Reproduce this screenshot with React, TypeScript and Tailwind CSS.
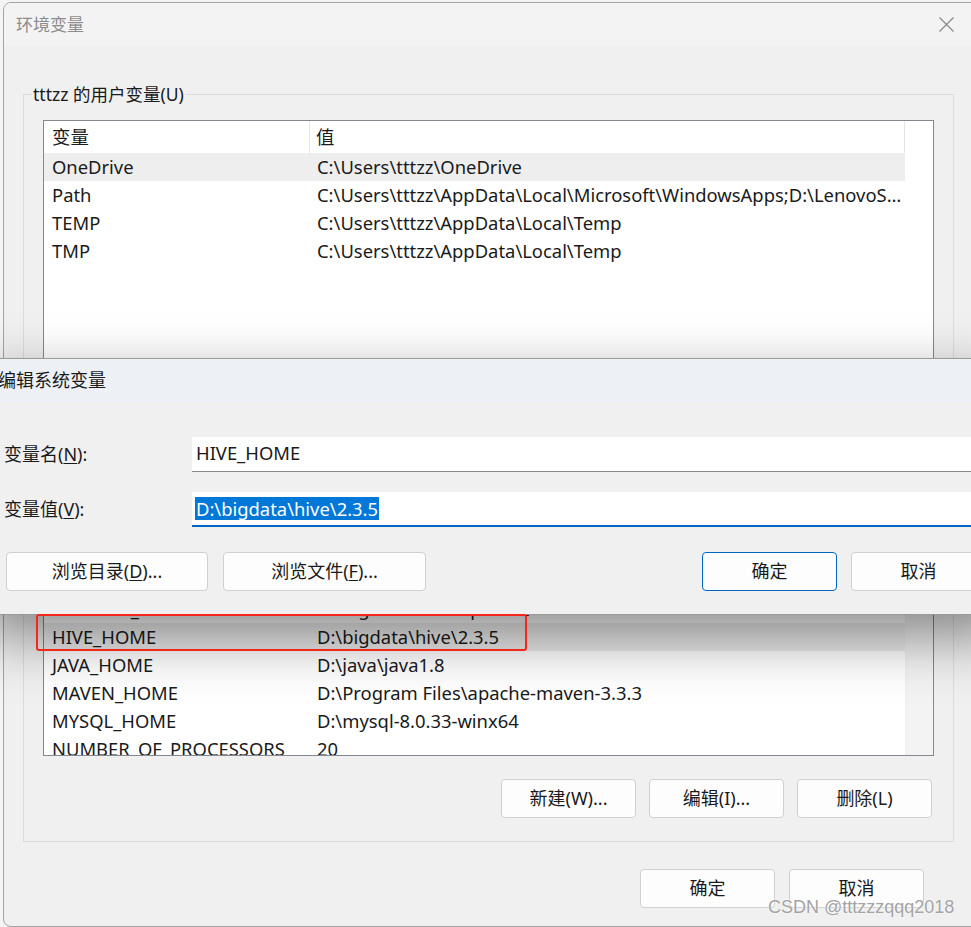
import clsx from "clsx";

const font = "font-['Noto_Sans','Noto_Sans_CJK_SC',sans-serif]";

type Var = { name: string; value: string; selected?: boolean };

const userVars: Var[] = [
  { name: "OneDrive", value: "C:\\Users\\tttzz\\OneDrive", selected: true },
  {
    name: "Path",
    value:
      "C:\\Users\\tttzz\\AppData\\Local\\Microsoft\\WindowsApps;D:\\LenovoSoftstore\\Install",
  },
  { name: "TEMP", value: "C:\\Users\\tttzz\\AppData\\Local\\Temp" },
  { name: "TMP", value: "C:\\Users\\tttzz\\AppData\\Local\\Temp" },
];

const systemVars: Var[] = [
  { name: "ComSpec", value: "C:\\Windows\\system32\\cmd.exe" },
  { name: "DriverData", value: "C:\\Windows\\System32\\Drivers\\DriverData" },
  { name: "HADOOP_HOME", value: "D:\\bigdata\\hadoop\\2.7.2" },
  { name: "HIVE_HOME", value: "D:\\bigdata\\hive\\2.3.5", selected: true },
  { name: "JAVA_HOME", value: "D:\\java\\java1.8" },
  { name: "MAVEN_HOME", value: "D:\\Program Files\\apache-maven-3.3.3" },
  { name: "MYSQL_HOME", value: "D:\\mysql-8.0.33-winx64" },
  { name: "NUMBER_OF_PROCESSORS", value: "20" },
];

function Header() {
  return (
    <div className="flex h-[32px] w-[861px] shrink-0 items-center bg-white">
      <div className="flex h-full w-[266px] items-center border-r border-[#e5e5e5] pl-[8px]">
        变量
      </div>
      <div className="flex h-full flex-1 items-center border-r border-[#e5e5e5] pl-[6px]">
        值
      </div>
    </div>
  );
}

function Row({ v }: { v: Var }) {
  return (
    <div
      className={clsx(
        "flex h-[28px] w-[861px] shrink-0 items-center",
        v.selected && "bg-[#eeeeee]",
      )}
    >
      <div className="w-[266px] truncate pl-[8px]">{v.name}</div>
      <div className="min-w-0 flex-1 truncate pl-[7px]">{v.value}</div>
    </div>
  );
}

function Btn({
  children,
  className,
  primary,
}: {
  children: React.ReactNode;
  className?: string;
  primary?: boolean;
}) {
  return (
    <div
      className={clsx(
        "flex h-[39px] shrink-0 items-center justify-center rounded-[4px] border bg-[#fdfdfd] text-[18px] text-[#1a1a1a]",
        primary ? "border-[#0067c0]" : "border-[#d0d0d0]",
        className,
      )}
    >
      {children}
    </div>
  );
}

function Group({
  label,
  children,
  className,
}: {
  label: string;
  children: React.ReactNode;
  className?: string;
}) {
  return (
    <fieldset className={clsx("w-[931px] border border-[#dcdcdc] px-[19px] pb-[23px]", className)}>
      <legend className="-ml-[11px] px-[1px] text-[17.5px] leading-[22px] text-[#1a1a1a]">
        {label}
      </legend>
      {children}
    </fieldset>
  );
}

function EditDialog() {
  return (
    <div className="absolute left-[-19px] top-[358px] flex h-[257px] w-[1030px] flex-col border border-[#9a9a9a] bg-[#f0f0f0] shadow-[0_22px_55px_rgba(0,0,0,0.45)]">
      <div className="flex h-[43px] shrink-0 items-center bg-[#edf1f6] pl-[16px] text-[18px] text-[#1a1a1a]">
        编辑系统变量
      </div>
      <div className="flex flex-1 flex-col pl-[22px] pr-[24px] pt-[35px]">
        <div className="grid grid-cols-[188px_1fr] items-center text-[18px] text-[#1a1a1a]">
          <div>
            变量名(<span className="underline underline-offset-2">N</span>):
          </div>
          <div className="flex h-[35px] items-center border-b border-[#8a8a8a] bg-white pb-[2px] pl-[4px] text-[18.4px]">
            HIVE_HOME
          </div>
        </div>
        <div className="mt-[20px] grid grid-cols-[188px_1fr] items-center text-[18px] text-[#1a1a1a]">
          <div>
            变量值(<span className="underline underline-offset-2">V</span>):
          </div>
          <div className="flex h-[35px] items-center border-b-2 border-[#0067c0] bg-white pl-[3px] text-[18.4px]">
            <span className="bg-[#0078d7] px-[1px] leading-[23px] text-white">
              D:\bigdata\hive\2.3.5
            </span>
          </div>
        </div>
        <div className="mt-[25px] flex items-center">
          <div className="ml-[2px] flex gap-[15px]">
            <Btn className="w-[202px]">
              浏览目录(<span className="underline underline-offset-2">D</span>)...
            </Btn>
            <Btn className="w-[203px]">
              浏览文件(<span className="underline underline-offset-2">F</span>)...
            </Btn>
          </div>
          <div className="ml-auto flex gap-[14px]">
            <Btn primary className="w-[135px]">
              确定
            </Btn>
            <Btn className="w-[135px]">取消</Btn>
          </div>
        </div>
      </div>
    </div>
  );
}

export default function App() {
  return (
    <div className={clsx("relative h-[927px] w-[971px] overflow-hidden bg-[#f4f4f4] text-[18.4px] text-[#1a1a1a]", font)}>
      <div className="ml-[3px] mt-[2px] flex h-[925px] w-[980px] flex-col overflow-hidden rounded-[8px] border border-[#a3a3a3] bg-[#f0f0f0]">
        <div className="flex h-[43px] shrink-0 items-center justify-between bg-[#f3f3f3] pl-[12px] pr-[28px]">
          <span className="text-[17px] text-[#8c8c8c]">环境变量</span>
          <svg width="15" height="15" viewBox="0 0 15 15">
            <path d="M0.5 0.5 L14.5 14.5 M14.5 0.5 L0.5 14.5" stroke="#8a8a8a" strokeWidth="1.3" />
          </svg>
        </div>

        <div className="flex flex-col pl-[19px]">
          <Group label="tttzz 的用户变量(U)" className="mt-[37px]">
            <div className="mt-[15px] flex h-[261px] flex-col border border-[#828790] bg-white">
              <Header />
              {userVars.map((v) => (
                <Row key={v.name} v={v} />
              ))}
            </div>
            <div className="mt-[23px] flex justify-end gap-[13px] pr-[2px]">
              <Btn className="w-[135px]">新建(N)...</Btn>
              <Btn className="w-[135px]">编辑(E)...</Btn>
              <Btn className="w-[135px]">删除(D)</Btn>
            </div>
          </Group>

          <Group label="系统变量(S)" className="mt-[4px]">
            <div className="mt-[13px] flex h-[250px] border border-[#828790] bg-white">
              <div className="flex flex-col overflow-hidden">
                <Header />
                {systemVars.map((v) => (
                  <Row key={v.name} v={v} />
                ))}
              </div>
              <div className="w-[28px] shrink-0 border-l border-[#f0f0f0] bg-[#f3f3f3]" />
            </div>
            <div className="mt-[23px] flex justify-end gap-[13px] pr-[2px]">
              <Btn className="w-[135px]">新建(W)...</Btn>
              <Btn className="w-[135px]">编辑(I)...</Btn>
              <Btn className="w-[135px]">删除(L)</Btn>
            </div>
          </Group>

          <div className="mt-[27px] flex gap-[14px] pl-[617px]">
            <Btn className="w-[135px]">确定</Btn>
            <Btn className="w-[135px]">取消</Btn>
          </div>
        </div>
      </div>

      <EditDialog />

      <div className="absolute left-[36px] top-[614px] h-[37px] w-[491px] rounded-[3px] border-2 border-[#f5261b]" />

      <div className="absolute left-[768px] top-[894px] font-['Liberation_Sans',sans-serif] text-[18px] text-[#a3a3a3] [text-shadow:0_0_2px_#fff,0_0_1px_#fff]">
        CSDN @tttzzzqqq2018
      </div>
    </div>
  );
}
